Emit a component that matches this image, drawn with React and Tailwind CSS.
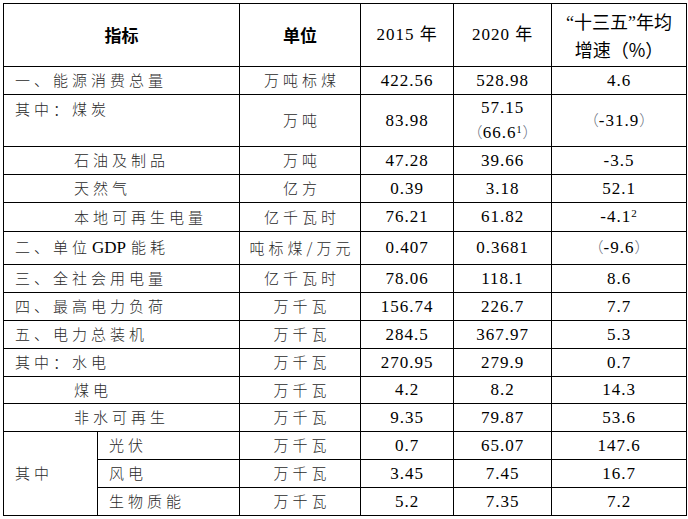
import React from 'react'

// 表格数据
const rows = [
  { label: '一、能源消费总量', indent: 0, unit: '万吨标煤', a: '422.56', b: '528.98', c: '4.6', h: 'h-[28px]' },
  { label: '其中：煤炭', indent: 0, unit: '万吨', a: '83.98', b: 'coal', c: 'paren:-31.9', h: 'h-[52px]', top: true },
  { label: '石油及制品', indent: 1, unit: '万吨', a: '47.28', b: '39.66', c: '-3.5', h: 'h-[28px]' },
  { label: '天然气', indent: 1, unit: '亿方', a: '0.39', b: '3.18', c: '52.1', h: 'h-[28px]' },
  { label: '本地可再生电量', indent: 1, unit: '亿千瓦时', a: '76.21', b: '61.82', c: 'sup:-4.1:2', h: 'h-[29px]' },
  { label: 'gdp', indent: 0, unit: '吨标煤/万元', a: '0.407', b: '0.3681', c: 'paren:-9.6', h: 'h-[33px]' },
  { label: '三、全社会用电量', indent: 0, unit: '亿千瓦时', a: '78.06', b: '118.1', c: '8.6', h: 'h-[28px]' },
  { label: '四、最高电力负荷', indent: 0, unit: '万千瓦', a: '156.74', b: '226.7', c: '7.7', h: 'h-[28px]' },
  { label: '五、电力总装机', indent: 0, unit: '万千瓦', a: '284.5', b: '367.97', c: '5.3', h: 'h-[28px]' },
  { label: '其中：水电', indent: 0, unit: '万千瓦', a: '270.95', b: '279.9', c: '0.7', h: 'h-[28px]' },
  { label: '煤电', indent: 1, unit: '万千瓦', a: '4.2', b: '8.2', c: '14.3', h: 'h-[27px]' },
  { label: '非水可再生', indent: 1, unit: '万千瓦', a: '9.35', b: '79.87', c: '53.6', h: 'h-[28px]' },
]

const subRows = [
  { label: '光伏', unit: '万千瓦', a: '0.7', b: '65.07', c: '147.6' },
  { label: '风电', unit: '万千瓦', a: '3.45', b: '7.45', c: '16.7' },
  { label: '生物质能', unit: '万千瓦', a: '5.2', b: '7.35', c: '7.2' },
]

const td = 'border border-black p-0'
const cjk = "font-['Noto_Sans_CJK_SC',sans-serif]"
const serif = "font-['Liberation_Serif','Noto_Sans_CJK_SC',serif]"
const txt = `${cjk} text-[15px] tracking-[4px] text-[#2a2a2a] font-light`
const numCell = `${td} ${serif} text-center text-[17px] tracking-[1px] text-black`
const paren = `${cjk} text-[15px] font-light text-gray-500 tracking-normal`

function Value({ v }) {
  if (v === 'coal') {
    return (
      <div className="leading-[24px]">
        <div>57.15</div>
        <div>
          <span className={paren}>（</span>66.6<sup className="text-[10px]">1</sup>
          <span className={paren}>）</span>
        </div>
      </div>
    )
  }
  if (v.startsWith('paren:')) {
    return (
      <span>
        <span className={paren}>（</span>
        {v.slice(6)}
        <span className={paren}>）</span>
      </span>
    )
  }
  if (v.startsWith('sup:')) {
    const [, base, s] = v.split(':')
    return (
      <span>
        {base}
        <sup className="text-[11px]">{s}</sup>
      </span>
    )
  }
  return <span>{v}</span>
}

function Label({ r }) {
  if (r.label === 'gdp') {
    return (
      <span>
        二、单位
        <span className={`${serif} text-[17px] tracking-normal font-normal text-black ml-[1px] mr-[5px]`}>GDP</span>
        能耗
      </span>
    )
  }
  return <span>{r.label}</span>
}

function NumCells({ r }) {
  return (
    <>
      <td className={numCell}>
        <Value v={r.a} />
      </td>
      <td className={numCell}>
        <Value v={r.b} />
      </td>
      <td className={numCell}>
        <Value v={r.c} />
      </td>
    </>
  )
}

export default function App() {
  return (
    <div className="w-[688px] h-[519px] bg-white pt-[3px] pl-[3px] overflow-hidden">
      <table className="table-fixed border-collapse w-[683px]">
        <colgroup>
          <col className="w-[94px]" />
          <col className="w-[142px]" />
          <col className="w-[121px]" />
          <col className="w-[93px]" />
          <col className="w-[98px]" />
          <col className="w-[135px]" />
        </colgroup>
        <tbody>
          <tr className="h-[63px]">
            <td colSpan={2} className={`${td} ${cjk} text-center text-[17px] font-bold text-black`}>
              指标
            </td>
            <td className={`${td} ${cjk} text-center text-[17px] font-bold text-black`}>单位</td>
            <td className={numCell}>2015 年</td>
            <td className={numCell}>2020 年</td>
            <td className={`${td} ${cjk} text-center text-[18px] leading-[26px] text-black`}>
              <div>
                <span className={serif}>“</span>十三五<span className={serif}>”</span>年均
              </div>
              <div>增速（%）</div>
            </td>
          </tr>
          {rows.map((r, i) => (
            <tr key={i} className={r.h}>
              <td
                colSpan={2}
                className={`${td} ${txt} ${r.top ? 'align-top leading-[28px]' : ''} ${
                  r.indent ? 'pl-[70px]' : 'pl-[11px]'
                }`}
              >
                <Label r={r} />
              </td>
              <td className={`${td} ${txt} text-center pl-1`}>{r.unit}</td>
              <NumCells r={r} />
            </tr>
          ))}
          {subRows.map((r, i) => (
            <tr key={r.label} className="h-[28px]">
              {i === 0 && (
                <td rowSpan={3} className={`${td} ${txt} pl-[11px]`}>
                  其中
                </td>
              )}
              <td className={`${td} ${txt} pl-[11px]`}>{r.label}</td>
              <td className={`${td} ${txt} text-center pl-1`}>{r.unit}</td>
              <NumCells r={r} />
            </tr>
          ))}
        </tbody>
      </table>
    </div>
  )
}
